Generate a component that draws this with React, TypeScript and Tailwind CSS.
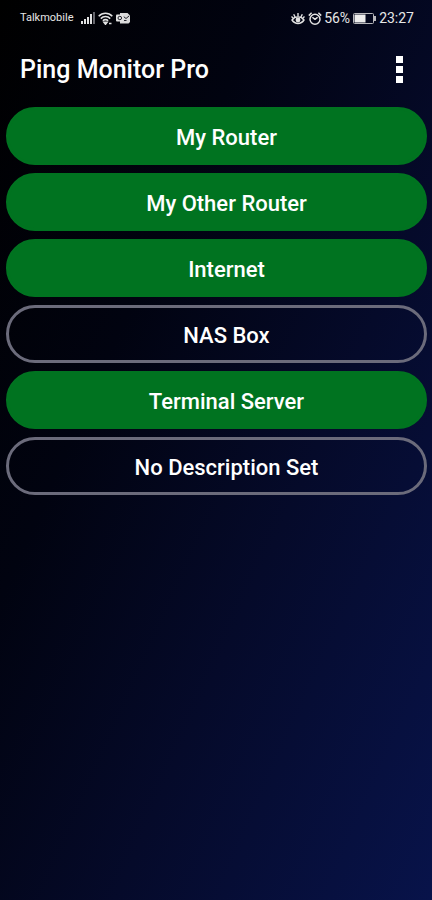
import { useState } from "react";

type Host = {
  name: string;
  online: boolean;
};

const initialHosts: Host[] = [
  { name: "My Router", online: true },
  { name: "My Other Router", online: true },
  { name: "Internet", online: true },
  { name: "NAS Box", online: false },
  { name: "Terminal Server", online: true },
  { name: "No Description Set", online: false },
];

function SignalIcon() {
  return (
    <svg width="14" height="12" viewBox="0 0 14 12" fill="#e2e2e2" aria-hidden="true">
      <rect x="0" y="9" width="2" height="3" />
      <rect x="3" y="7" width="2" height="5" />
      <rect x="6" y="5" width="2" height="7" />
      <rect x="9" y="2" width="2" height="10" />
      <rect x="12" y="0" width="2" height="12" fill="#66666c" />
    </svg>
  );
}

function WifiIcon() {
  return (
    <svg width="15" height="13" viewBox="0 0 15 13" fill="none" stroke="#e2e2e2" strokeWidth="1.6" aria-hidden="true">
      <path d="M.7 4.2C4.5.2 10.5.2 14.3 4.2" />
      <path d="M2.8 6.6C5.4 3.8 9.6 3.8 12.2 6.6" />
      <path d="M4.9 8.8C6.4 7.2 8.6 7.2 10.1 8.8" />
      <path d="M6 10.2h3l-1.5 2zM11 11.5h2.5" fill="#e2e2e2" />
    </svg>
  );
}

function MailIcon() {
  return (
    <svg width="14" height="12" viewBox="0 0 14 12" aria-hidden="true">
      <path d="M4 1h7.5L14 3.5V10l-1.5 1.5H4z" fill="#d9d9d9" />
      <path d="M7.5 4.5l2.5 2 3-2.5M8 8.5h2.5" fill="none" stroke="#22232c" />
      <rect x="0" y="2.5" width="7.5" height="7" rx="1" fill="#e2e2e2" />
      <ellipse cx="3.8" cy="6" rx="1.8" ry="1.7" fill="none" stroke="#22232c" />
    </svg>
  );
}

function EyeIcon() {
  return (
    <svg width="14" height="13" viewBox="0 0 14 13" fill="none" stroke="#e2e2e2" strokeWidth="1.4" aria-hidden="true">
      <path d="M1 8C4 3.8 10 3.8 13 8C10 12.6 4 12.6 1 8z" />
      <circle cx="7" cy="8" r="1.7" fill="#e2e2e2" />
      <path d="M7 1v3.6M2.7 2.3l1.5 3M11.3 2.3l-1.5 3M.5 4.6l2 1.8M13.5 4.6l-2 1.8" />
    </svg>
  );
}

function AlarmIcon() {
  return (
    <svg width="14" height="13" viewBox="0 0 14 13" fill="none" stroke="#e2e2e2" strokeWidth="1.5" aria-hidden="true">
      <circle cx="7" cy="7.2" r="5" />
      <path d="M7 7.4L4.4 5.2M7 7.4l2.6-2.2M.8 3.6L3.6.8M13.2 3.6L10.4.8" />
    </svg>
  );
}

function BatteryIcon() {
  return (
    <svg width="23" height="11" viewBox="0 0 23 11" aria-hidden="true">
      <rect x=".5" y=".5" width="20" height="10" rx="1" fill="none" stroke="#b9b9bd" />
      <rect x="1.5" y="1.5" width="11" height="8" fill="#ececec" />
      <rect x="21" y="3" width="2" height="5" fill="#b9b9bd" />
    </svg>
  );
}

function StatusBar() {
  return (
    <div className="flex h-9 items-center justify-between pl-5 pr-[18px] text-[#e6e6e6]">
      <div className="flex items-center">
        <span className="text-[11px]">Talkmobile</span>
        <span className="ml-2 flex items-center gap-[3px]">
          <SignalIcon />
          <WifiIcon />
          <MailIcon />
        </span>
      </div>
      <div className="flex items-center text-sm">
        <span className="mr-0.5 flex items-center gap-[3px]">
          <EyeIcon />
          <AlarmIcon />
        </span>
        <span>56%</span>
        <span className="mx-[3px]">
          <BatteryIcon />
        </span>
        <span>23:27</span>
      </div>
    </div>
  );
}

export default function App() {
  const [hosts, setHosts] = useState<Host[]>(initialHosts);

  const toggleHost = (index: number) => {
    setHosts(hosts.map((host, i) => (i === index ? { ...host, online: !host.online } : host)));
  };

  return (
    <div className="min-h-screen bg-[linear-gradient(114deg,#000000_0%,#010310_32%,#050a2a_62%,#08134a_100%)] font-[Roboto,sans-serif] text-white">
      <StatusBar />

      <header className="flex h-[71px] items-center justify-between pb-1 pl-5 pr-[17px]">
        <h1 className="text-[25px] font-medium">Ping Monitor Pro</h1>
        <button type="button" aria-label="More options" className="flex h-10 w-8 flex-col items-center justify-center gap-[3px]">
          <span className="h-[7px] w-[7px] bg-white"></span>
          <span className="h-[7px] w-[7px] bg-white"></span>
          <span className="h-[7px] w-[7px] bg-white"></span>
        </button>
      </header>

      <main className="flex flex-col gap-2 pl-1.5 pr-[5px]">
        {hosts.map((host, index) => (
          <button
            key={host.name}
            type="button"
            onClick={() => toggleHost(index)}
            className={
              host.online
                ? "h-[58px] rounded-full border-3 border-[#007320] bg-[#007320] pt-0.5 pl-5 text-[22px] font-medium"
                : "h-[58px] rounded-full border-3 border-[#6b6b7b] pt-0.5 pl-5 text-[22px] font-medium"
            }
          >
            {host.name}
          </button>
        ))}
      </main>
    </div>
  );
}
